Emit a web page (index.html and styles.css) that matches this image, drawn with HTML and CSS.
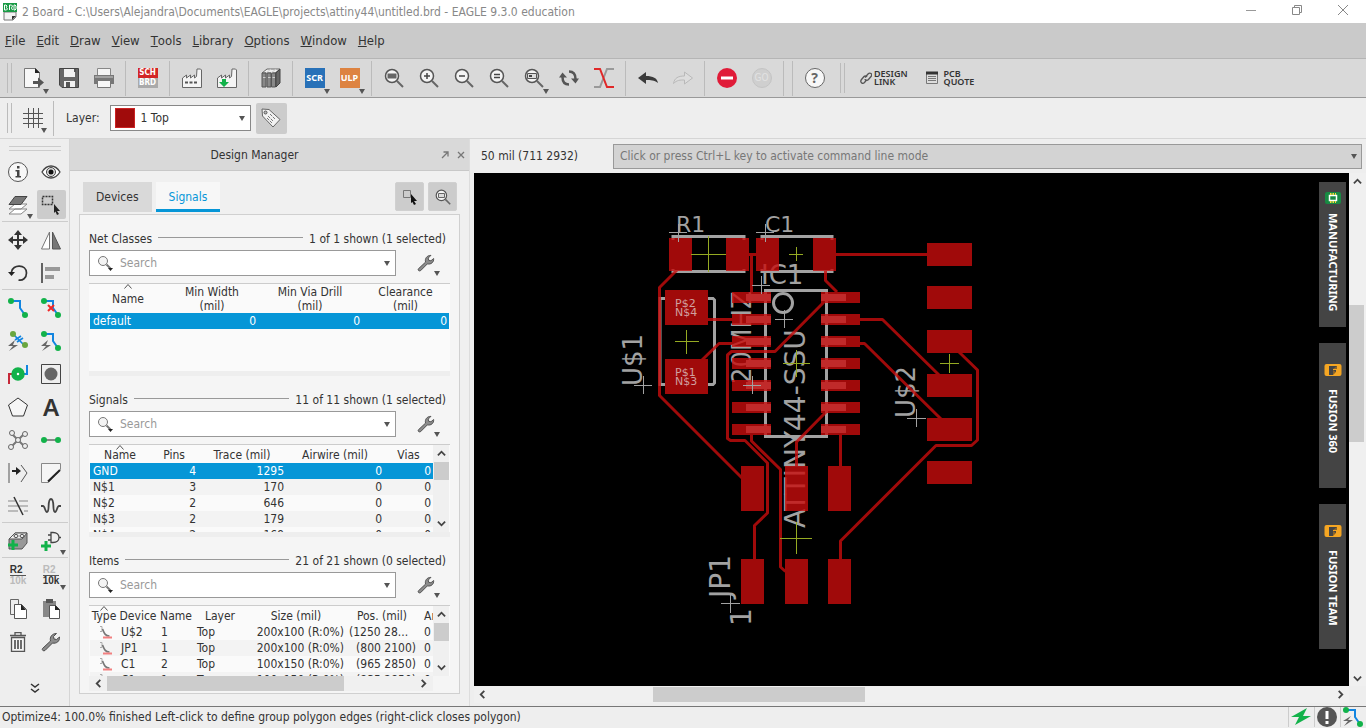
FILE: index.html
```html
<!DOCTYPE html>
<html lang="en">
<head>
<meta charset="utf-8">
<title>2 Board - EAGLE 9.3.0 education</title>
<link rel="stylesheet" href="styles.css">
</head>
<body>
<svg class="defs" aria-hidden="true">
  <defs>
    <symbol id="wrench" viewBox="0 0 20 20"><path d="M1.500 16.500 9.500 9C8.500 5 11 1.500 15.500 1.500L12.500 4.500 13 7 15.500 7.500 18.500 5C19 9 15.500 12 11.500 11L4 18.500C2.500 19.500.5 18 1.500 16.500Z" fill="#8c8c8c" stroke="#4c4c4c"/></symbol>
    <symbol id="find" viewBox="0 0 18 18"><circle cx="6" cy="7" r="4.500" fill="#f4f4f4" stroke="#777"/><path d="m9.500 10.500 4 4" stroke="#777" stroke-width="2"/><path d="M11 14h5l-2.500 3z" fill="#222"/></symbol>
    <symbol id="lens" viewBox="0 0 20 20"><circle cx="8" cy="8" r="6.500" fill="#f4f4f4" stroke="#555" stroke-width="1.500"/><path d="m13 13 6 6" stroke="#666" stroke-width="2"/></symbol>
    <symbol id="up" viewBox="0 0 10 10"><path d="m1 7 4-4 4 4" fill="none" stroke="#444" stroke-width="2"/></symbol>
    <symbol id="down" viewBox="0 0 10 10"><path d="m1 3 4 4 4-4" fill="none" stroke="#444" stroke-width="2"/></symbol>
    <symbol id="left" viewBox="0 0 10 10"><path d="M7 1 3 5l4 4" fill="none" stroke="#444" stroke-width="2"/></symbol>
    <symbol id="right" viewBox="0 0 10 10"><path d="m3 1 4 4-4 4" fill="none" stroke="#444" stroke-width="2"/></symbol>
    <symbol id="sort" viewBox="0 0 8 5"><path d="m.5 4.500 3.500-4 3.500 4" fill="none" stroke="#555"/></symbol>
    <symbol id="item" viewBox="0 0 14 14"><path d="M2 1.500h2v5H2" fill="none" stroke="#aaa"/><path d="M4.500 4c2 5 3 7 7 7" fill="none" stroke="#777" stroke-width="1.700"/><path d="M5 12.500h9" stroke="#f28080" stroke-width="2"/></symbol>
    <symbol id="fusion" viewBox="0 0 18 18"><rect width="17" height="12" x=".5" y="3" rx="2" fill="#f5a623"/><path d="M5 5h8v3H9v1h3v2H9v3H5z" fill="#444"/><path d="m9 8 4-3v3zM9 9l3 2-3 3z" fill="#8b642a"/></symbol>
  </defs>
</svg>

<header class="titlebar">
  <svg class="app-icon" width="16" height="18" viewBox="0 0 16 18"><path d="M2 9h12v5l-3 3H2z" fill="#f3f3f3" stroke="#777"/><path d="M10 17v-4h4z" fill="#333"/><rect x="1" width="14" height="9" fill="#199a45"/><path d="M2.500 2v5h2l1-1-1-1.500L5 3 4 2zm5 5V2h2l1 1-1 2 1 2M12 2v5h1l1-1V3l-1-1z" fill="none" stroke="#fff"/></svg>
  <span class="title">2 Board - C:\Users\Alejandra\Documents\EAGLE\projects\attiny44\untitled.brd - EAGLE 9.3.0 education</span>
  <div class="winbtns">
    <button aria-label="Minimize"><svg width="12" height="12"><path d="M1 6.500h10" stroke="#999"/></svg></button>
    <button aria-label="Restore"><svg width="12" height="12"><path d="M1.500 3.500h7v7h-7zM3.500 3V1.500h7v7H9" fill="none" stroke="#888"/></svg></button>
    <button aria-label="Close"><svg width="12" height="12"><path d="m1 1 10 10M11 1 1 11" stroke="#888"/></svg></button>
  </div>
</header>

<nav class="menubar">
  <button><u>F</u>ile</button><button><u>E</u>dit</button><button><u>D</u>raw</button><button><u>V</u>iew</button><button><u>T</u>ools</button><button><u>L</u>ibrary</button><button><u>O</u>ptions</button><button><u>W</u>indow</button><button><u>H</u>elp</button>
</nav>

<div class="toolbar">
  <i class="grip"></i>
  <button class="drop" aria-label="New"><svg width="20" height="20"><path d="M.5.500h11l4 4v15H.500z" fill="#f7f7f7" stroke="#777"/><path d="M11 0v5h5z" fill="#222"/><path d="M9 13h5V9.500l6 5-6 5V16H9z" fill="#555"/></svg></button>
  <button aria-label="Save"><svg width="20" height="20"><path d="M.5.500h19v19H3L.500 17z" fill="#666" stroke="#444"/><path d="M5 1h11v8H5zM5 13h11v6H5z" fill="#f1f1f1"/><path d="M7 14h4v5H7zM15 1h2v3h-2z" fill="#555"/></svg></button>
  <button aria-label="Print"><svg width="20" height="20"><path d="M3.500.500h13v7h-13z" fill="#f4f4f4" stroke="#888"/><path d="M0 7h20v9H0z" fill="#777"/><path d="M1 9h18" stroke="#ccc"/><path d="M3.500 12.500h13v7h-13z" fill="#f7f7f7" stroke="#777"/></svg></button>
  <i class="sep"></i>
  <button aria-label="Schematic"><span class="schbrd"><b>SCH</b><b>BRD</b></span></button>
  <i class="sep"></i>
  <button aria-label="CAM"><svg width="20" height="20"><path d="M.5 19.500V10l4-3v3l4-3v3l4-3v3l2-1.500L15 1h3.500l1 1v17.500z" fill="#f4f4f4" stroke="#666"/><path d="M3 14.500h12" stroke="#555" stroke-width="2" stroke-dasharray="3 1.500"/></svg></button>
  <button aria-label="Manufacturing export"><svg width="20" height="20"><path d="M.5 19.500V10l4-3v3l4-3v3l4-3v3l2-1.500L15 1h3.500l1 1v17.500z" fill="#f4f4f4" stroke="#666"/><path d="M5 11h4v3h3l-5 5-5-5h3z" fill="#12b24a"/></svg></button>
  <i class="sep"></i>
  <button aria-label="Library"><svg width="20" height="20"><path d="m1 5 5-4h13l-5 4z" fill="#eee" stroke="#666"/><path d="M1 5h4v14H1zM6 5h4v14H6zM10.500 5h4v14h-4z" fill="#888" stroke="#555"/><path d="m15 5 4-4v14l-4 4z" fill="#666" stroke="#444"/><path d="M2 9.500h2.500M7 9.500h2.500M11.500 9.500H14M5 5l5-4M10 5l5-4" stroke="#ccc"/></svg></button>
  <i class="sep"></i>
  <button class="drop"><span class="tile scr">SCR</span></button>
  <button class="drop"><span class="tile ulp">ULP</span></button>
  <i class="sep"></i>
  <button aria-label="Fit"><svg width="20" height="20"><use href="#lens"/><path d="M3.500 5.500h9v5h-9z" fill="#666"/></svg></button>
  <button aria-label="Zoom in"><svg width="20" height="20"><use href="#lens"/><path d="M8 5v6M5 8h6" stroke="#444" stroke-width="1.500"/></svg></button>
  <button aria-label="Zoom out"><svg width="20" height="20"><use href="#lens"/><path d="M5 8h6" stroke="#444" stroke-width="1.500"/></svg></button>
  <button aria-label="Redraw"><svg width="20" height="20"><use href="#lens"/><path d="M5 6.500h6M5 9.500h6" stroke="#444" stroke-width="1.500"/></svg></button>
  <button class="drop" aria-label="Zoom select"><svg width="20" height="20"><use href="#lens"/><path d="M3.500 5.500h9v5h-9z" fill="#ddd" stroke="#555"/><path d="M5 7h3v2H5z" fill="#444"/></svg></button>
  <button aria-label="Refresh"><svg width="20" height="20"><path d="M3.500 9c0 5 2.500 7.500 6.500 7.500M16.500 11c0-5-2.500-7.500-6.500-7.500" fill="none" stroke="#555" stroke-width="2.500"/><path d="m0 9.500 3.500-5 4.500 5zM12 10.500l4.500 5 3.500-5z" fill="#555"/></svg></button>
  <button aria-label="Net toggle"><svg width="20" height="20"><path d="M0 19h6l7-18h7" fill="none" stroke="#999" stroke-width="2"/><path d="M0 1h6l7 18h7" fill="none" stroke="#e02828" stroke-width="2"/></svg></button>
  <i class="sep"></i>
  <button aria-label="Undo"><svg width="20" height="20"><path d="m0 10 8-6v4c7 0 11 2 12 7-4-3-7-3-12-3v4z" fill="#3b3b3b"/></svg></button>
  <button aria-label="Redo"><svg width="20" height="20"><path d="m19.500 10-8-6v4C5 8 1.500 10 .5 15.500 4 12 7 12 11.500 12v4z" fill="#ddd" stroke="#b9b9b9"/></svg></button>
  <i class="sep"></i>
  <button aria-label="Stop"><svg width="20" height="20"><circle cx="10" cy="10" r="10" fill="#e01b38"/><path d="M4 10h12" stroke="#fff" stroke-width="3"/></svg></button>
  <button disabled><span class="go">GO</span></button>
  <i class="sep"></i><i class="sep"></i>
  <button><span class="help">?</span></button>
  <i class="grip wide"></i>
  <button class="labelled"><svg width="12" height="14" viewBox="0 0 12 14"><path d="M5 6.500 8 3c2-2 5 0 3 2.500L8.500 8.500C7 10 5 9 5 8M7 6C6 4.500 4.500 5 4 5.500L1.500 8.500C-.5 11 2.500 13.500 4.500 11.500L6.500 9" fill="none" stroke="#555" stroke-width="1.300"/></svg><span>DESIGN<br>LINK</span></button>
  <button class="labelled quote"><svg width="12" height="14"><path d="M.5 1.500h11v11H.500z" fill="#ddd" stroke="#777"/><path d="M0 2h12" stroke="#333" stroke-width="3"/><path d="M2 5.500h8M2 7.500h8M2 9.500h8" stroke="#777"/></svg><span>PCB<br>QUOTE</span></button>
</div>

<div class="optionbar">
  <i class="grip"></i>
  <button class="drop gridbtn" aria-label="Grid"><svg width="20" height="20"><path d="M5.500 0v20M10.500 0v20M15.500 0v20M0 5.500h20M0 10.500h20M0 15.500h20" stroke="#555"/></svg></button>
  <i class="sep"></i>
  <label for="layer">Layer:</label>
  <div class="layerbox"><i class="swatch"></i><select id="layer"><option>1 Top</option></select></div>
  <button class="pressed tag" aria-label="Tag"><svg width="20" height="20"><path d="m1 1 7 .5 11 10-7 7.500L1.500 8z" fill="#f2f2f2" stroke="#666"/><circle cx="4.500" cy="4.500" r="1.500" fill="#bbb" stroke="#555"/><path d="m9 6 5 5M7 8l5 5M6 10l5 5" stroke="#777" stroke-dasharray="3 1"/></svg></button>
</div>

<main class="workspace">
  <aside class="tools">
    <i class="hgrip"></i>
    <div class="toolgrid">
      <button aria-label="Info"><svg width="20" height="20"><circle cx="10" cy="10" r="9.500" fill="#f7f7f7" stroke="#555"/><path d="M9 4h2.500v2.500H9zM7.500 8h4v6H13v1.500H7.500V14H9V9.500H7.500z" fill="#444"/></svg></button>
      <button aria-label="Show"><svg width="20" height="20"><path d="M1 10c5-8 13-8 18 0-5 8-13 8-18 0z" fill="#fff" stroke="#444" stroke-width="1.300"/><circle cx="10" cy="10" r="4.500" fill="#ddd" stroke="#444"/><circle cx="10" cy="10" r="2.500" fill="#111"/></svg></button>
      <button class="drop" aria-label="Layers"><svg width="20" height="20"><path d="m1 19 6-5h12l-6 5zM1 14l6-5h12l-6 5z" fill="#fff" stroke="#888"/><path d="m1 9.500 6-8h12l-6 8z" fill="#777" stroke="#444"/></svg></button>
      <button class="pressed" aria-label="Group"><svg width="20" height="20"><path d="M1.500 1.500h10v8h-10z" fill="none" stroke="#333" stroke-width="1.500" stroke-dasharray="2 1"/><path d="m13 9 6 7h-3l2 3-2 1-1.500-3.500L13 18z" fill="#222"/></svg></button>
      <hr>
      <button aria-label="Move"><svg width="20" height="20"><path d="M10 3v14M3 10h14" stroke="#333" stroke-width="2"/><path d="m10 0 4 5H6zM10 20l4-5H6zM0 10l5-4v8zM20 10l-5-4v8z" fill="#333"/></svg></button>
      <button aria-label="Mirror"><svg width="20" height="20"><path d="M8.500 2v17h-8z" fill="#fff" stroke="#777"/><path d="M11.500 2v17h8z" fill="#777" stroke="#555"/></svg></button>
      <button aria-label="Rotate"><svg width="20" height="20"><path d="M3.500 9c1-8 15-8 15 1 0 5-4 8-8 7" fill="none" stroke="#333" stroke-width="1.700"/><path d="M0 9h7l-3.500 4z" fill="#222"/></svg></button>
      <button aria-label="Align"><svg width="20" height="20"><path d="M1 0v20" stroke="#333" stroke-width="1.500"/><path d="M4 6h15M4 14h9" stroke="#999" stroke-width="4"/></svg></button>
      <hr>
      <button aria-label="Route"><svg width="20" height="20"><path d="M3 3h9v7l5 7" fill="none" stroke="#1285e0" stroke-width="2"/><circle cx="3" cy="3" r="3" fill="#12b24a"/><circle cx="17" cy="17" r="3" fill="#12b24a"/></svg></button>
      <button aria-label="Ripup"><svg width="20" height="20"><path d="M3 3h9v7l5 7" fill="none" stroke="#1285e0" stroke-width="2"/><circle cx="3" cy="3" r="3" fill="#12b24a"/><circle cx="17" cy="17" r="3" fill="#12b24a"/><path d="m7 7 6 6m0-6-6 6" stroke="#f02828" stroke-width="2"/></svg></button>
      <button aria-label="Route multi"><svg width="20" height="20"><path d="m5 3 12 12M7 9l6-4M9 11l6-4" stroke="#1285e0" stroke-width="1.700"/><circle cx="5" cy="3" r="3" fill="#6aa63f"/><circle cx="17" cy="14" r="3" fill="#6aa63f"/><path d="m7 9-7 6h5l-4 5 9-6H5z" fill="#666"/></svg></button>
      <button aria-label="Autoroute"><svg width="20" height="20"><path d="M3 3h9v7l5 7" fill="none" stroke="#1285e0" stroke-width="2"/><circle cx="3" cy="3" r="3" fill="#12b24a"/><circle cx="17" cy="17" r="3" fill="#12b24a"/><path d="m7 9-7 6h5l-4 5 9-6H5z" fill="#666"/></svg></button>
      <button aria-label="Via"><svg width="20" height="20"><path d="M1 20V10h5" fill="none" stroke="#c62838" stroke-width="2"/><path d="M15 10h4V1" fill="none" stroke="#1285e0" stroke-width="2"/><circle cx="10" cy="10" r="4" fill="#fff" stroke="#12b24a" stroke-width="5.500"/></svg></button>
      <button aria-label="Pad"><svg width="20" height="20"><path d="M.5.500h19v19H.500z" fill="#eee" stroke="#444"/><circle cx="10" cy="10" r="6.500" fill="#666"/></svg></button>
      <button aria-label="Polygon"><svg width="20" height="20"><path d="m10 1 9.500 7-4 11h-11L.500 8z" fill="#f6f6f6" stroke="#333"/></svg></button>
      <button><span class="text-tool">A</span></button>
      <button aria-label="Ratsnest"><svg width="20" height="20"><path d="m4 4 12 12M16 4 3 17" stroke="#777" stroke-width="2"/><g fill="#eee" stroke="#666"><circle cx="4" cy="3" r="2.500"/><circle cx="17" cy="4" r="2.500"/><circle cx="10" cy="10" r="2.500"/><circle cx="3" cy="17" r="2.500"/><circle cx="17" cy="16" r="2.500"/></g></svg></button>
      <button aria-label="Signal"><svg width="20" height="20"><path d="M3 10h14" stroke="#888" stroke-width="2"/><circle cx="3" cy="10" r="3" fill="#12b24a"/><circle cx="17" cy="10" r="3" fill="#12b24a"/></svg></button>
      <button aria-label="Split"><svg width="20" height="20"><path d="M1 0v20M13 2l6 8-6 9" fill="none" stroke="#555"/><path d="M4 8h6" stroke="#222" stroke-width="2"/><path d="m8 4 5 4-5 4z" fill="#222"/></svg></button>
      <button aria-label="Miter"><svg width="20" height="20"><path d="M.5.500h19v6l-12 13h-7z" fill="#f5f5f5" stroke="#888"/><path d="M19 7 7 18.500" stroke="#222" stroke-width="2"/></svg></button>
      <button aria-label="Slice"><svg width="20" height="20"><path d="M0 5h7m4 0h9M0 10h20M0 15h10m6 0h4" stroke="#aaa" stroke-width="1.500"/><path d="m6 1 9 18" stroke="#333" stroke-width="1.500"/></svg></button>
      <button aria-label="Meander"><svg width="20" height="20"><path d="M0 10h2c2 0 2 6 4 6 3 0 0-13 4-13s1 13 4 13c2 0 2-6 4-6h2" fill="none" stroke="#444" stroke-width="1.800"/></svg></button>
      <hr>
      <button aria-label="Add part"><svg width="20" height="20"><path d="m1 8 6-6h12v10l-5 6H1z" fill="#999" stroke="#555"/><path d="m1 8 6-6h12l-5 6z" fill="#eee" stroke="#555"/><ellipse cx="8" cy="5" rx="2" ry="1.500" fill="#fff" stroke="#444"/><ellipse cx="14" cy="5" rx="2" ry="1.500" fill="#fff" stroke="#444"/><path d="M5 9v10M0 14h10" stroke="#12b24a" stroke-width="3"/></svg></button>
      <button class="drop" aria-label="Add gate"><svg width="20" height="20"><path d="M10 1.500h2c8 0 8 10 0 10h-2zM7 4h3M7 9h3M18 6.500h3" fill="none" stroke="#444" stroke-width="1.300"/><path d="M5 10v10M0 15h10" stroke="#12b24a" stroke-width="3"/></svg></button>
      <hr>
      <button><span class="rv"><b>R2</b><b class="dim">10k</b></span></button>
      <button class="drop"><span class="rv"><b class="dim">R2</b><b>10k</b></span></button>
      <button aria-label="Copy"><svg width="20" height="20"><path d="M2.500.500h8v15h-8z" fill="#eee" stroke="#666"/><path d="M6.500 5.500h7l5 5v9h-12z" fill="#fff" stroke="#555"/><path d="M13 5v6h5z" fill="#222"/></svg></button>
      <button aria-label="Paste"><svg width="20" height="20"><path d="M2 2h13v16H2z" fill="#888"/><path d="M5 0h7v4H5z" fill="#555"/><path d="M8.500 6.500h6l4 4v9h-10z" fill="#fff" stroke="#555"/><path d="M14 6v5h5z" fill="#222"/></svg></button>
      <button aria-label="Delete"><svg width="20" height="20"><path d="M3.500 5.500h13v14h-13zM2 3.500h16M7 3V.500h6V3" fill="#f5f5f5" stroke="#555" stroke-width="1.300"/><path d="M7 8v9M10 8v9M13 8v9" stroke="#555" stroke-width="1.700"/></svg></button>
      <button aria-label="Settings"><svg width="20" height="20"><use href="#wrench"/></svg></button>
    </div>
    <button class="more" aria-label="More"><svg width="10" height="10"><path d="m1 1 4 3 4-3M1 6l4 3 4-3" fill="none" stroke="#333" stroke-width="1.500"/></svg></button>
  </aside>

  <section class="manager">
    <header class="mgrhead"><h1>Design Manager</h1>
      <button aria-label="Undock"><svg width="8" height="8"><path d="m1 7 6-6M2.500 1H7v4.500" fill="none" stroke="#777" stroke-width="1.300"/></svg></button>
      <button aria-label="Close panel"><svg width="8" height="8"><path d="m1 1 6 6M7 1 1 7" stroke="#777" stroke-width="1.300"/></svg></button>
    </header>
    <div class="tabs">
      <button class="tab">Devices</button><button class="tab active">Signals</button>
      <span class="grow"></span>
      <button class="pressed" aria-label="Pick"><svg width="16" height="16"><path d="M1.500 1.500h7v7h-7z" fill="none" stroke="#777"/><path d="m9 5 6 7h-3l2 3-2 1-1.500-3L9 14z" fill="#111"/></svg></button>
      <button class="pressed" aria-label="Zoom to"><svg width="16" height="16"><use href="#lens"/><path d="M3.500 4.500h6v4h-6z" fill="#ddd" stroke="#666"/></svg></button>
    </div>
    <div class="group">
      <section class="block">
        <div class="legend"><span>Net Classes</span><i></i><span>1 of 1 shown (1 selected)</span></div>
        <div class="searchrow"><div class="search"><svg width="18" height="18"><use href="#find"/></svg><input aria-label="Search net classes" placeholder="Search"><i class="tri"></i></div><button class="drop" aria-label="Options"><svg width="18" height="18"><use href="#wrench"/></svg></button></div>
        <div class="tablebox">
          <div class="clip"><table>
            <colgroup><col class="w76"><col class="w92"><col class="w104"><col></colgroup>
            <thead class="double"><tr><th><svg class="sort"><use href="#sort"/></svg>Name</th><th>Min Width<br>(mil)</th><th>Min Via Drill<br>(mil)</th><th>Clearance<br>(mil)</th></tr></thead>
            <tbody><tr class="sel"><td>default</td><td class="n">0</td><td class="n">0</td><td class="n">0</td></tr></tbody>
          </table></div>
        </div>
      </section>
      <section class="block">
        <div class="legend"><span>Signals</span><i></i><span>11 of 11 shown (1 selected)</span></div>
        <div class="searchrow"><div class="search"><svg width="18" height="18"><use href="#find"/></svg><input aria-label="Search signals" placeholder="Search"><i class="tri"></i></div><button class="drop" aria-label="Options"><svg width="18" height="18"><use href="#wrench"/></svg></button></div>
        <div class="tablebox">
          <div class="clip"><table>
            <colgroup><col class="w60"><col class="w48"><col class="w88"><col class="w98"><col></colgroup>
            <thead><tr><th><svg class="sort"><use href="#sort"/></svg>Name</th><th>Pins</th><th>Trace (mil)</th><th>Airwire (mil)</th><th>Vias</th></tr></thead>
            <tbody>
              <tr class="sel"><td>GND</td><td class="n">4</td><td class="n">1295</td><td class="n">0</td><td class="n">0</td></tr>
              <tr><td>N$1</td><td class="n">3</td><td class="n">170</td><td class="n">0</td><td class="n">0</td></tr>
              <tr><td>N$2</td><td class="n">2</td><td class="n">646</td><td class="n">0</td><td class="n">0</td></tr>
              <tr><td>N$3</td><td class="n">2</td><td class="n">179</td><td class="n">0</td><td class="n">0</td></tr>
              <tr><td>N$4</td><td class="n">2</td><td class="n">169</td><td class="n">0</td><td class="n">0</td></tr>
            </tbody>
          </table></div>
          <div class="vbar"><svg><use href="#up"/></svg><i class="thumb"></i><svg><use href="#down"/></svg></div>
        </div>
      </section>
      <section class="block last">
        <div class="legend"><span>Items</span><i></i><span>21 of 21 shown (0 selected)</span></div>
        <div class="searchrow"><div class="search"><svg width="18" height="18"><use href="#find"/></svg><input aria-label="Search items" placeholder="Search"><i class="tri"></i></div><button class="drop" aria-label="Options"><svg width="18" height="18"><use href="#wrench"/></svg></button></div>
        <div class="tablebox">
          <div class="clip"><table class="items">
            <colgroup><col class="w28"><col class="w40"><col class="w36"><col class="w52"><col class="w100"><col class="w72"><col class="w60"></colgroup>
            <thead><tr><th><svg class="sort"><use href="#sort"/></svg>Type</th><th>Device</th><th>Name</th><th>Layer</th><th>Size (mil)</th><th>Pos. (mil)</th><th class="l">Angle</th></tr></thead>
            <tbody>
              <tr><td><svg class="it"><use href="#item"/></svg></td><td>U$2</td><td>1</td><td>Top</td><td class="n">200x100 (R:0%)</td><td>(1250 28...</td><td class="l">0</td></tr>
              <tr><td><svg class="it"><use href="#item"/></svg></td><td>JP1</td><td>1</td><td>Top</td><td class="n">200x100 (R:0%)</td><td class="n">(800 2100)</td><td class="l">0</td></tr>
              <tr><td><svg class="it"><use href="#item"/></svg></td><td>C1</td><td>2</td><td>Top</td><td class="n">100x150 (R:0%)</td><td class="n">(965 2850)</td><td class="l">0</td></tr>
              <tr><td><svg class="it"><use href="#item"/></svg></td><td>C1</td><td>1</td><td>Top</td><td class="n">100x150 (R:0%)</td><td class="n">(835 2850)</td><td class="l">0</td></tr>
            </tbody>
          </table></div>
          <div class="vbar"><svg><use href="#up"/></svg><i class="thumb"></i><svg><use href="#down"/></svg></div>
        </div>
        <div class="hbar"><svg><use href="#left"/></svg><i class="track"><i class="thumb"></i></i><svg><use href="#right"/></svg></div>
      </section>
    </div>
  </section>

  <section class="editor">
    <div class="cmdrow"><span class="coords">50 mil (711 2932)</span><div class="cmd"><input aria-label="Command line" placeholder="Click or press Ctrl+L key to activate command line mode"><i class="tri"></i></div></div>
    <div class="viewport">
      <div class="canvas">
        <svg class="board"><g transform="translate(-474 -173)">
          <g class="silk">
            <path d="M673 240v-3.500h71v3.500M673 269v2.500h71v-2.500M762 240v-3.500h70v3.500M762 269v2.500h70v-2.500M665 298.500h-5v86h5M708 298.500h5l1.500 1.500v83l-1.500 1.500h-5M765.500 290.500h61v146h-61z"/>
            <circle cx="783" cy="303" r="9.500"/>
          </g>
          <g class="lead">
            <path d="M746 294h25v7h-25zM746 316h25v7h-25zM746 338h25v7h-25zM746 360h25v7h-25zM746 382h25v7h-25zM746 404h25v7h-25zM746 426h25v7h-25z"/>
            <path d="M821 294h25v7h-25zM821 316h25v7h-25zM821 338h25v7h-25zM821 360h25v7h-25zM821 382h25v7h-25zM821 404h25v7h-25zM821 426h25v7h-25z"/>
          </g>
          <g class="names">
            <text class="s22" x="676" y="232">R1</text><text class="s22" x="765" y="232">C1</text><text class="s26" x="761" y="284">IC1</text>
            <text transform="translate(805 528) rotate(-90)">ATTINY44-SSU</text>
            <text class="s26" transform="translate(751 384) rotate(-90)">20MHZ</text>
            <text class="s26" transform="translate(642 386) rotate(-90)">U$1</text>
            <text class="s26" transform="translate(915 418) rotate(-90)">U$2</text>
            <text transform="translate(730 598) rotate(-90)">JP1</text>
            <text transform="translate(751 626) rotate(-90)">1</text>
          </g>
          <g class="copper">
            <path class="pads" d="M669 238h23v33h-23zM726 238h23v33h-23zM756 238h23v33h-23zM813 238h23v33h-23zM665 290h43v35h-43zM665 359h43v35h-43z
              M732 292h39v11h-39zM732 314h39v11h-39zM732 336h39v11h-39zM732 358h39v11h-39zM732 380h39v11h-39zM732 402h39v11h-39zM732 424h39v11h-39z
              M821 292h39v11h-39zM821 314h39v11h-39zM821 336h39v11h-39zM821 358h39v11h-39zM821 380h39v11h-39zM821 402h39v11h-39zM821 424h39v11h-39z
              M741 466h23v45h-23zM785 466h23v45h-23zM828 466h23v45h-23zM741 559h23v45h-23zM785 559h23v45h-23zM828 559h23v45h-23z
              M927 243h45v23h-45zM927 286h45v23h-45zM927 330h45v23h-45zM927 374h45v23h-45zM927 418h45v23h-45zM927 461h45v23h-45z"/>
            <path class="wires" d="M677 270 659.500 287.500V395.500L742 478M749 254.500h7M751.500 254.500V293M836 254.500h92M825.500 270v10.500L837 292M708 319.500h24M702 360l17-16.500h14M860 319.500h22.500L939 375M859 343.500h5.500L941 419M959 352l18.500 18v70l-6 5.500H936L840.500 541v19M826 300 775 351.500H731.500L727.500 355v83.500l3 2H745l22.500 22.500v50L754.500 525.500V560M751.500 434v7L780.500 469.500v97.500l5 4.500M826 412 796.500 442v25M840.500 434v33"/>
          </g>
          <g class="padnames"><text x="675" y="307">P$2</text><text x="675" y="316">N$4</text><text x="675" y="376">P$1</text><text x="675" y="385">N$3</text></g>
          <path class="origin" d="M669 232.500h18M678.500 224v18M756 232.500h18M765.500 224v18M752 285.500h18M761.500 276v18M775 319.500h18M784.500 310v18M743 385.500h18M752.500 376v18M634 385.500h18M643.500 376v18M721 603.500h19M730.500 594v19M907 418.500h19M916.500 409v18"/>
          <path class="centre" d="M691 254.500h35M708.500 236v36M789 254.500h14M796.500 247v14M675 341.500h24M686.500 330v24M783 363.500h27M796.500 350v27M780 538.500h32M796.500 522v32M940 363.500h19M949.500 354v19"/>
        </g></svg>
        <div class="sidetabs">
          <button class="near"><svg width="18" height="18"><rect x="1" y="3" width="16" height="12" rx="2" fill="#188a43"/><path d="M5.500 6.500h7v5h-7z" fill="none" stroke="#fff" stroke-width="1.500"/><path d="M6 5h6M6 13h6" stroke="#f3dc3c" stroke-width="2" stroke-dasharray="1.500 1"/></svg>MANUFACTURING</button>
          <button><svg width="18" height="18"><use href="#fusion"/></svg>FUSION 360</button>
          <button><svg width="18" height="18"><use href="#fusion"/></svg>FUSION TEAM</button>
        </div>
      </div>
      <div class="vbar main"><svg><use href="#up"/></svg><i class="track"><i class="thumb"></i></i><svg><use href="#down"/></svg></div>
      <div class="hbar main"><svg><use href="#left"/></svg><i class="track"><i class="thumb"></i></i><svg><use href="#right"/></svg></div>
    </div>
  </section>
</main>

<footer class="status">
  <span>Optimize4: 100.0% finished Left-click to define group polygon edges (right-click closes polygon)</span>
  <div class="indicators">
    <svg width="20" height="20"><path d="M16 1 0 10h8l-4 8 16-9h-8z" fill="#12b24a"/></svg>
    <svg width="20" height="20"><circle cx="10" cy="10" r="10" fill="#555"/><path d="M10 4v8M10 14v3" stroke="#fff" stroke-width="3"/></svg>
    <svg width="20" height="20"><path d="M3 3h9v7l5 7" fill="none" stroke="#1285e0" stroke-width="2"/><circle cx="3" cy="3" r="3" fill="#12b24a"/><circle cx="17" cy="17" r="3" fill="#12b24a"/><path d="m8 9-8 5h5l-4 5 9-6H5z" fill="#666"/></svg>
  </div>
</footer>
</body>
</html>
```
FILE: styles.css
```css
* { box-sizing: border-box; }
body {
  margin: 0;
  height: 100vh;
  display: flex;
  flex-direction: column;
  overflow: hidden;
  background: #eee;
  color: #333;
  font: 12px/16px "DejaVu Sans Condensed", "Noto Sans", sans-serif;
}
button, input, select { font: inherit; color: inherit; border: 0; padding: 0; margin: 0; background: none; border-radius: 0; outline: 0; }
button { display: flex; align-items: center; justify-content: center; }
svg { flex: none; display: block; }
.defs { position: absolute; width: 0; height: 0; }
.grow { flex: 1; }

.titlebar { display: flex; align-items: center; height: 23px; background: #fff; color: #888; padding-left: 2px; gap: 4px; flex: none; }
.title { flex: 1; }
.winbtns { display: flex; padding-bottom: 3px; }
.winbtns button { width: 46px; height: 20px; }

.menubar { display: flex; align-items: center; gap: 11px; height: 36px; flex: none; padding: 0 5px; background: #cacaca; border-bottom: 1px solid #b5b5b5; font-size: 13px; line-height: 20px; }

.toolbar { display: flex; align-items: center; height: 39px; flex: none; padding-left: 7px; background: #d9d9d9; border-bottom: 1px solid #999; }
.toolbar button { width: 35px; height: 35px; flex: none; }
.grip { width: 5px; height: 30px; margin-right: 4px; border: solid #bbb; border-width: 0 1px; flex: none; }
.grip.wide { margin: 0 15px 0 8px; }
.sep { width: 9px; height: 35px; flex: none; background: linear-gradient(#bbb, #bbb) 4px 0 / 1px 100% no-repeat; }
.drop { position: relative; }
.drop::after, .tri { border: solid transparent; border-width: 5px 3px 0; border-top-color: #555; width: 0; height: 0; }
.drop::after { content: ""; position: absolute; right: 2px; bottom: 2px; }
.schbrd { display: grid; width: 20px; }
.schbrd b { height: 10px; font: bold 8px/10px "DejaVu Sans Condensed", sans-serif; text-align: center; color: #fff; background: #d32626; }
.schbrd b + b { background: #aaa; }
.tile { width: 20px; height: 20px; font: bold 9px/20px "Noto Sans", sans-serif; color: #fff; text-align: center; }
.scr { background: #2871b8; }
.ulp { background: #dd8341; }
.go, .help { width: 20px; height: 20px; border-radius: 50%; text-align: center; }
.go { background: #cfcfcf; border: 1px solid #c4c4c4; color: #e2e2e2; font-size: 10px; line-height: 18px; }
.help { background: #f7f7f7; border: 1px solid #666; color: #666; font: bold 14px/18px "Noto Sans", sans-serif; }
.toolbar .labelled { width: auto; gap: 2px; color: #333; font: 600 9px/8px "Noto Sans", sans-serif; text-align: left; }
.toolbar .quote { margin-left: 18px; gap: 6px; }

.optionbar { display: flex; align-items: center; height: 41px; flex: none; padding: 0 0 0 7px; border-bottom: 1px solid #d5d5d5; }
.gridbtn { width: 33px; height: 33px; }
.optionbar label { margin: 0 10px 0 8px; }
.layerbox { display: flex; align-items: center; width: 141px; height: 26px; border: 1px solid #888; background: #fff; position: relative; padding-left: 4px; }
.layerbox::after { content: ""; border: solid transparent; border-width: 5px 3px 0; border-top-color: #555; position: absolute; right: 5px; top: 10px; }
.swatch { width: 20px; height: 20px; background: #a00b0b; border: 1px solid #c22; }
.layerbox select { appearance: none; flex: 1; height: 24px; padding-left: 6px; }
.pressed { background: #ccc; border-radius: 2px; }
.tag { width: 31px; height: 31px; margin-left: 5px; }

.workspace { flex: 1; display: flex; min-height: 0; }
.tools { width: 70px; flex: none; display: flex; flex-direction: column; align-items: center; padding: 7px 1px 0; border: solid #d5d5d5; border-width: 0 1px 0 0; }
.hgrip { width: 52px; height: 5px; border: solid #ccc; border-width: 1px 0; margin-bottom: 4px; }
.toolgrid { display: grid; grid-template-columns: 33px 33px; grid-auto-rows: auto; }
.toolgrid button { width: 33px; height: 33px; }
.toolgrid .pressed { width: 29px; height: 29px; margin: 2px; }
.toolgrid hr { grid-column: 1 / 3; width: 100%; height: 2px; margin: 0; border: 0; border-top: 1px solid #ccc; }
.text-tool { font: 600 24px/24px "Noto Sans", sans-serif; }
.rv { display: grid; font: 10px/10px "Liberation Sans", sans-serif; text-align: left; }
.rv b + b { border-top: 1px solid #555; }
.rv .dim { color: #bbb; }
.more { width: 20px; height: 20px; margin-top: 20px; }

.manager { width: 400px; flex: none; display: flex; flex-direction: column; background: #f0f0f0; border-right: 1px solid #ddd; }
.mgrhead { display: flex; align-items: center; height: 32px; flex: none; background: #d9d9d9; border-bottom: 1px solid #c8c8c8; padding: 0 4px 0 6px; gap: 8px; }
.mgrhead h1 { flex: 1; margin: 0; font-size: 12px; font-weight: normal; text-align: center; }
.tabs { display: flex; gap: 4px; padding: 11px 12px 0 13px; height: 43px; flex: none; }
.tab { height: 30px; padding: 0 13px; background: #d9d9d9; }
.tab.active { background: #f7f7f7; color: #0696d7; border-bottom: 3px solid #0696d7; padding-top: 3px; }
.tabs .pressed { width: 29px; height: 29px; border: 1px solid #d0d0d0; }
.group { margin: 0 9px 12px; flex: 1; min-height: 0; display: flex; flex-direction: column; border: 1px solid #d0d0d0; background: #f5f5f5; padding: 14px 9px 1px; }
.block { height: 161px; flex: none; }
.legend { display: flex; align-items: center; gap: 6px; height: 20px; padding-right: 4px; }
.legend i { flex: 1; height: 1px; background: #999; margin-bottom: 4px; }
.searchrow { display: flex; align-items: center; justify-content: space-between; margin: 1px 10px 7px 0; }
.search { display: flex; align-items: center; width: 307px; height: 26px; border: 1px solid #999; background: #fff; padding: 0 5px 0 7px; gap: 5px; }
.search input { flex: 1; min-width: 0; height: 24px; }
input::placeholder { color: #999; opacity: 1; }
.searchrow .drop { width: 28px; height: 26px; }
.searchrow .drop::after { right: 0; bottom: 0; }
.tablebox { display: flex; height: 93px; border-top: 1px solid #ccc; border-bottom: 5px solid #eee; background: #fafafa; padding: 0 1px; }
.clip { flex: 1; min-width: 0; overflow: hidden; }
table { width: 100%; table-layout: fixed; border-collapse: collapse; }
table.items { width: 388px; }
th { font-weight: normal; padding: 2px 0 0; height: 18px; line-height: 16px; white-space: nowrap; position: relative; }
.double th { padding: 1px 0 0; height: 28px; line-height: 14px; }
th .sort { width: 8px; height: 5px; position: absolute; left: 50%; top: 0; margin-left: -4px; }
td { height: 16px; padding: 0 2px 0 3px; line-height: 16px; white-space: nowrap; }
tr:nth-child(even) td { background: #f3f3f3; }
.sel td { background: #0696d7; color: #fff; }
.n { text-align: right; }
th.l { text-align: left; }
.l { padding-left: 6px; }
.it { width: 14px; height: 14px; margin-left: 5px; }
.w28 { width: 28px; } .w36 { width: 36px; } .w40 { width: 40px; } .w48 { width: 48px; } .w52 { width: 52px; }
.w60 { width: 60px; } .w72 { width: 72px; } .w76 { width: 76px; } .w88 { width: 88px; } .w92 { width: 92px; } .w98 { width: 98px; } .w100 { width: 100px; } .w104 { width: 104px; }
.vbar { width: 16px; flex: none; display: flex; flex-direction: column; align-items: center; background: #f0f0f0; padding: 4px 0; }
.vbar svg, .hbar svg { width: 9px; height: 9px; }
.thumb { background: #ccc; }
.vbar > .thumb { width: 15px; height: 18px; margin: 4px 0 auto; }
.last { flex: 1; height: auto; }
.last .tablebox { height: 71px; border-bottom: 0; }
.hbar { display: flex; align-items: center; height: 15px; background: #f0f0f0; padding: 0 5px; margin-right: 17px; }
.track { flex: 1; display: flex; align-self: stretch; }
.hbar .track { margin: 0 4px; }
.hbar .thumb { width: 77%; }

.editor { flex: 1; min-width: 0; display: flex; flex-direction: column; }
.cmdrow { display: flex; align-items: center; height: 34px; flex: none; padding: 0 4px 0 11px; }
.coords { width: 132px; }
.cmd { flex: 1; display: flex; align-items: center; height: 25px; border: 1px solid #999; background: #d3d3d3; padding: 0 4px 0 6px; }
.cmd input { flex: 1; height: 23px; }
.cmd input::placeholder { color: #777; }
.viewport { flex: 1; min-height: 0; display: grid; grid-template-columns: 1fr 17px; grid-template-rows: 1fr 20px; padding-left: 4px; }
.canvas { position: relative; background: #000; overflow: hidden; min-width: 0; }
.board { width: 100%; height: 100%; }
.silk { fill: none; stroke: #a2a2a2; stroke-width: 3; }
.lead { fill: #a2a2a2; }
.names { fill: #a2a2a2; font: 28px "DejaVu Sans", sans-serif; }
.names .s22 { font-size: 22px; }
.names .s26 { font-size: 26px; }
.padnames { fill: #d0a0a0; font: 11px "DejaVu Sans", sans-serif; }
.copper { opacity: .8; }
.pads { fill: #c80d0d; }
.wires { fill: none; stroke: #c80d0d; stroke-width: 3; stroke-linejoin: round; }
.origin { fill: none; stroke: #a2a2a2; }
.centre { fill: none; stroke: #95aa22; }
.sidetabs { position: absolute; top: 9px; right: 3px; display: grid; gap: 16px; }
.sidetabs button { width: 27px; height: 145px; writing-mode: vertical-rl; background: #444; color: #fff; font: bold 11px/16px "Noto Sans", sans-serif; justify-content: flex-start; gap: 10px; padding-top: 18px; }
.sidetabs .near { padding-top: 7px; gap: 6px; }
.vbar.main { width: 17px; padding: 4px 0 3px; }
.vbar .track { width: 15px; margin: 3px 0; flex-direction: column; }
.main .track .thumb { width: 100%; height: 137px; margin-top: 116px; }
.hbar.main { grid-column: 1 / 3; margin: 0 17px 3px 0; height: 17px; padding: 0 4px; }
.hbar.main .track { margin: 1px 0; }
.hbar.main .track .thumb { width: 25%; height: auto; margin: 0 0 0 19.5%; }

.status { display: flex; align-items: center; justify-content: space-between; height: 22px; flex: none; border-top: 1px solid #777; padding: 0 0 1px 2px; background: #eee; }
.indicators { display: flex; }
.indicators svg { width: 26px; padding: 0 2px; border-left: 1px solid #ccc; overflow: visible; }
```
